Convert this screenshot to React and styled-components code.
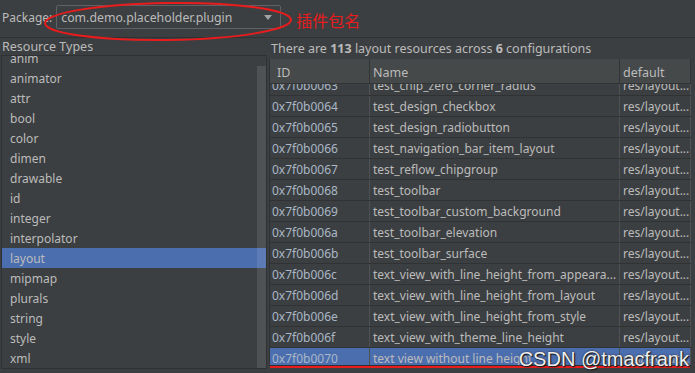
import React from 'react';
import styled, { createGlobalStyle } from 'styled-components';

const GlobalStyle = createGlobalStyle`
  html, body { margin: 0; padding: 0; background: #3c3f41; }
  body { font-family: "Noto Sans", "Open Sans", sans-serif; font-size: 12px; color: #bbbbbb; }
  * { box-sizing: border-box; }
`;

const Window = styled.div`
  position: relative;
  width: 695px;
  height: 373px;
  overflow: hidden;
  background: #3c3f41;
  display: flex;
  flex-direction: column;
`;

const TopBar = styled.div`
  height: 38px;
  flex: none;
  display: flex;
  align-items: center;
  padding: 0 0 4px 2px;
  border-bottom: 1px solid #2f3133;
`;

const Label = styled.span`
  color: #bbbbbb;
  font-size: 12px;
  padding-top: 2px;
`;

const Combo = styled.div`
  margin-left: 4px;
  width: 225px;
  height: 24px;
  border: 1px solid #5e6165;
  border-radius: 2px;
  display: flex;
  align-items: center;
  padding: 1px 8px 0 4px;
  font-size: 12.3px;
  color: #bbbbbb;
`;

const ComboText = styled.span`
  flex: 1;
`;

const Arrow = styled.span`
  width: 0;
  height: 0;
  border-left: 4px solid transparent;
  border-right: 4px solid transparent;
  border-top: 5px solid #a0a2a4;
`;

const Annotation = styled.span`
  margin: 6px 0 0 15px;
  color: #e81c1c;
  font-family: "Noto Sans CJK SC", sans-serif;
  font-size: 16px;
`;

const Ellipse = styled.svg`
  position: absolute;
  left: 43px;
  top: 1px;
  pointer-events: none;
`;

const Main = styled.div`
  flex: 1;
  display: flex;
  min-height: 0;
`;

const LeftPanel = styled.div`
  width: 267px;
  flex: none;
  display: flex;
  flex-direction: column;
  padding: 0 0 4px 1px;
`;

const PanelTitle = styled.div`
  height: 18px;
  flex: none;
  line-height: 18px;
  padding-left: 1px;
  font-size: 12.5px;
  color: #bbbbbb;
  border-bottom: 1px solid #2f3133;
`;

const TypeList = styled.div`
  position: relative;
  flex: 1;
  overflow: hidden;
  border: 1px solid #2f3133;
  border-top: none;
`;

const TypeRows = styled.div`
  margin-top: -8px;
`;

const TypeRow = styled.div`
  height: 20px;
  line-height: 22px;
  padding-left: 8px;
  overflow: hidden;
  color: #bbbbbb;
  background: ${p => (p.$selected ? '#4b6eaf' : 'transparent')};
`;

const ScrollThumb = styled.div`
  position: absolute;
  right: 0;
  top: 10px;
  bottom: 0;
  width: 9px;
  background: rgba(255, 255, 255, 0.1);
`;

const RightPanel = styled.div`
  position: relative;
  flex: 1;
  display: flex;
  flex-direction: column;
  padding: 0 0 7px 2px;
`;

const Summary = styled.div`
  height: 21px;
  flex: none;
  line-height: 22px;
  padding-left: 2px;
  font-size: 12.5px;
  color: #bbbbbb;
  b { font-weight: 700; }
`;

const Table = styled.div`
  width: 422px;
  flex: 1;
  display: flex;
  flex-direction: column;
  min-height: 0;
  border-left: 1px solid #2f3133;
  border-bottom: 1px solid #2f3133;
`;

const Row = styled.div`
  flex: none;
  display: grid;
  grid-template-columns: 100px 250px 71px;
  height: ${p => (p.$header ? '25px' : '21px')};
  background: ${p => (p.$header ? '#45494a' : p.$selected ? '#4b6eaf' : 'transparent')};
  border-bottom: 1px solid ${p => (p.$header ? '#323436' : '#303234')};
`;

const Cell = styled.div`
  overflow: hidden;
  white-space: nowrap;
  padding-left: ${p => (p.$header ? '7px' : '2px')};
  line-height: ${p => (p.$header ? '27px' : '22px')};
  font-size: ${p => (p.$header ? '12.5px' : '12px')};
  color: ${p => (p.$id ? '#a9b7c6' : '#bbbbbb')};
  border-right: 1px solid ${p => (p.$header ? '#323436' : '#4f5254')};
  & + & { padding-left: ${p => (p.$header ? '7px' : '3px')}; }
`;

const Body = styled.div`
  flex: 1;
  overflow: hidden;
  min-height: 0;
`;

const BodyInner = styled.div`
  margin-top: -9px;
`;

const RedUnderline = styled.div`
  position: absolute;
  left: 3px;
  width: 420px;
  bottom: 5px;
  height: 2px;
  background: #e81c1c;
`;

const Watermark = styled.div`
  position: absolute;
  right: 6px;
  bottom: 2px;
  font-family: "Liberation Sans", Arial, sans-serif;
  font-size: 20px;
  color: #eeeeee;
  text-shadow: 0 0 2px #222, 1px 1px 1px #111;
  pointer-events: none;
`;

const types = ['anim', 'animator', 'attr', 'bool', 'color', 'dimen', 'drawable', 'id', 'integer', 'interpolator', 'layout', 'mipmap', 'plurals', 'string', 'style', 'xml'];

const rows = [
  ['0x7f0b0063', 'test_chip_zero_corner_radius'],
  ['0x7f0b0064', 'test_design_checkbox'],
  ['0x7f0b0065', 'test_design_radiobutton'],
  ['0x7f0b0066', 'test_navigation_bar_item_layout'],
  ['0x7f0b0067', 'test_reflow_chipgroup'],
  ['0x7f0b0068', 'test_toolbar'],
  ['0x7f0b0069', 'test_toolbar_custom_background'],
  ['0x7f0b006a', 'test_toolbar_elevation'],
  ['0x7f0b006b', 'test_toolbar_surface'],
  ['0x7f0b006c', 'text_view_with_line_height_from_appeara...'],
  ['0x7f0b006d', 'text_view_with_line_height_from_layout'],
  ['0x7f0b006e', 'text_view_with_line_height_from_style'],
  ['0x7f0b006f', 'text_view_with_theme_line_height'],
  ['0x7f0b0070', 'text view without line height', true],
];

export default function App() {
  return (
    <Window>
      <GlobalStyle />
      <TopBar>
        <Label>Package:</Label>
        <Combo>
          <ComboText>com.demo.placeholder.plugin</ComboText>
          <Arrow />
        </Combo>
        <Annotation>插件包名</Annotation>
      </TopBar>
      <Ellipse width="252" height="42" viewBox="0 0 252 42">
        <ellipse cx="125" cy="20.5" rx="123" ry="18.5" fill="none" stroke="#e81c1c" strokeWidth="2" transform="rotate(-0.8 125 20.5)" />
      </Ellipse>
      <Main>
        <LeftPanel>
          <PanelTitle>Resource Types</PanelTitle>
          <TypeList>
            <TypeRows>
              {types.map(t => (
                <TypeRow key={t} $selected={t === 'layout'}>{t}</TypeRow>
              ))}
            </TypeRows>
            <ScrollThumb />
          </TypeList>
        </LeftPanel>
        <RightPanel>
          <Summary>
            There are <b>113</b> layout resources across <b>6</b> configurations
          </Summary>
          <Table>
            <Row $header>
              <Cell $header>ID</Cell>
              <Cell $header>Name</Cell>
              <Cell $header>default</Cell>
            </Row>
            <Body>
              <BodyInner>
                {rows.map(([id, name, sel]) => (
                  <Row key={id} $selected={sel}>
                    <Cell $id>{id}</Cell>
                    <Cell>{name}</Cell>
                    <Cell>res/layout...</Cell>
                  </Row>
                ))}
              </BodyInner>
            </Body>
          </Table>
          <RedUnderline />
        </RightPanel>
      </Main>
      <Watermark>CSDN @tmacfrank</Watermark>
    </Window>
  );
}
